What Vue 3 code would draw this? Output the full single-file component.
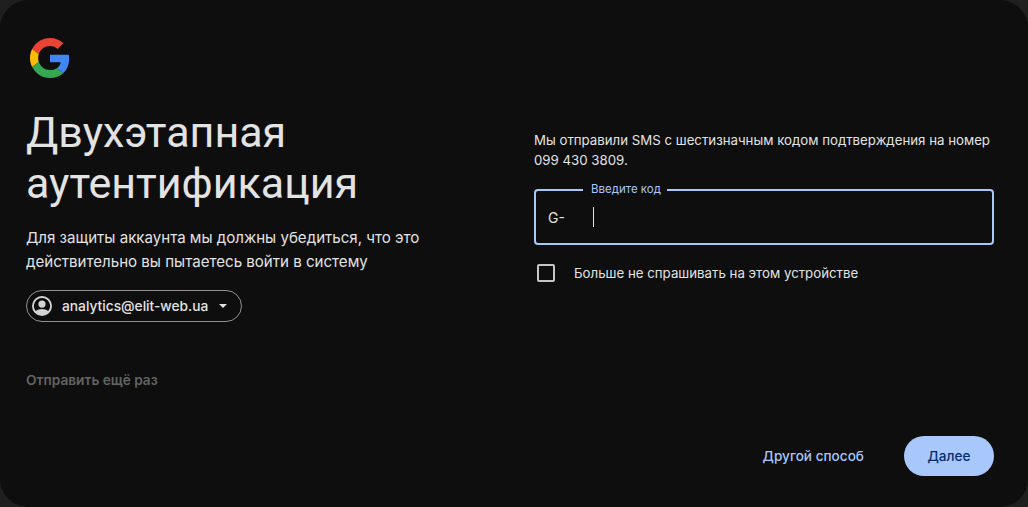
<script setup>
</script>

<template>
  <main class="card">
    <section class="left">
      <svg class="logo" viewBox="0 0 48 48" width="48" height="48" aria-label="Google">
        <path fill="#EA4335" d="M24 9.5c3.54 0 6.71 1.22 9.21 3.6l6.85-6.85C35.9 2.38 30.47 0 24 0 14.62 0 6.51 5.38 2.56 13.22l7.98 6.19C12.43 13.72 17.74 9.5 24 9.5z"/>
        <path fill="#4285F4" d="M46.98 24.55c0-1.57-.15-3.09-.38-4.55H24v9.02h12.94c-.58 2.96-2.26 5.48-4.78 7.18l7.73 6c4.51-4.18 7.09-10.36 7.09-17.65z"/>
        <path fill="#FBBC05" d="M10.53 28.59c-.48-1.45-.76-2.99-.76-4.59s.27-3.14.76-4.59l-7.98-6.19C.92 16.46 0 20.12 0 24c0 3.88.92 7.54 2.56 10.78l7.97-6.19z"/>
        <path fill="#34A853" d="M24 48c6.48 0 11.93-2.13 15.89-5.81l-7.73-6c-2.15 1.45-4.92 2.3-8.16 2.3-6.26 0-11.57-4.22-13.47-9.91l-7.98 6.19C6.51 42.62 14.62 48 24 48z"/>
      </svg>
      <h1 class="title">Двухэтапная аутентификация</h1>
      <p class="lead">Для защиты аккаунта мы должны убедиться, что это действительно вы пытаетесь войти в систему</p>
      <div class="account">
        <svg class="avatar" viewBox="0 0 24 24" width="24" height="24">
          <path fill="#d4d4d4" d="M12 2a10 10 0 1 0 0 20 10 10 0 0 0 0-20zm0 2a8 8 0 0 1 6.2 13.05C16.6 15.8 14.4 15 12 15s-4.6.8-6.2 2.05A8 8 0 0 1 12 4zm0 2.5a3.6 3.6 0 1 0 0 7.2 3.6 3.6 0 0 0 0-7.2z"/>
        </svg>
        <span class="email">analytics@elit-web.ua</span>
        <span class="caret"></span>
      </div>
      <a class="resend">Отправить ещё раз</a>
    </section>

    <section class="right">
      <p class="message">Мы отправили SMS с шестизначным кодом подтверждения на номер 099 430 3809.</p>
      <div class="field">
        <span class="legend">Введите код</span>
        <span class="prefix">G-</span>
        <span class="cursor"></span>
      </div>
      <label class="check">
        <span class="box"></span>
        <span>Больше не спрашивать на этом устройстве</span>
      </label>
      <div class="actions">
        <a class="other">Другой способ</a>
        <button class="next">Далее</button>
      </div>
    </section>
  </main>
</template>

<style>
html, body { margin: 0; background: #1f1f1f; }
</style>

<style scoped>
.card {
  box-sizing: border-box;
  width: 1028px;
  height: 507px;
  display: flex;
  padding: 38px 34px 31px 26px;
  background: #0e0e0e;
  border-radius: 28px;
  color: #e3e3e3;
  font-family: Inter, Roboto, sans-serif;
  overflow: hidden;
}
.left { width: 508px; flex: none; display: flex; flex-direction: column; align-items: flex-start; }
.logo { width: 40px; height: 40px; margin-left: 4px; }
.title {
  margin: 29px 0 0;
  width: 400px;
  font-family: Roboto, sans-serif;
  font-size: 43px;
  line-height: 51px;
  font-weight: 400;
  color: #e3e3e3;
}
.lead { margin: 17px 0 0; width: 420px; font-size: 15.08px; line-height: 24px; }
.account {
  box-sizing: border-box;
  margin-top: 16px;
  height: 32px;
  display: flex;
  align-items: center;
  padding: 0 14px 0 3px;
  border: 1px solid #8e918f;
  border-radius: 16px;
}
.avatar { flex: none; }
.email { margin-left: 8px; font-size: 13.75px; font-weight: 500; }
.caret {
  margin-left: 11px;
  border: 4px solid transparent;
  border-top-color: #e3e3e3;
  border-bottom-width: 0;
}
.resend { margin-top: 50px; font-size: 13.7px; font-weight: 600; color: #636363; }
.right { flex: 1; min-width: 0; display: flex; flex-direction: column; padding-top: 92px; }
.message { margin: 0; font-size: 13.25px; line-height: 20px; }
.field {
  position: relative;
  box-sizing: border-box;
  margin-top: 19px;
  height: 56px;
  display: flex;
  align-items: center;
  padding-left: 12px;
  border: 2px solid #a8c7fa;
  border-radius: 4px;
  font-size: 14px;
}
.legend {
  position: absolute;
  top: -10px;
  left: 47px;
  padding: 0 6px 0 8px;
  background: #0e0e0e;
  color: #a8c7fa;
  font-size: 11.5px;
  line-height: 16px;
}
.prefix { width: 45px; }
.cursor { width: 1px; height: 20px; background: #e3e3e3; }
.check { margin-top: 18px; display: flex; align-items: center; font-size: 13.28px; line-height: 20px; }
.box {
  box-sizing: border-box;
  width: 18px;
  height: 18px;
  margin: 0 19px 0 3px;
  border: 2px solid #c4c7c5;
  border-radius: 2px;
}
.actions { margin-top: auto; display: flex; align-items: center; justify-content: flex-end; }
.other { margin-right: 40px; color: #a8c7fa; font-size: 13.6px; font-weight: 500; }
.next {
  width: 90px;
  height: 40px;
  border: 0;
  border-radius: 20px;
  background: #a8c7fa;
  color: #062e6f;
  font: 500 13.6px Inter, sans-serif;
}
</style>
